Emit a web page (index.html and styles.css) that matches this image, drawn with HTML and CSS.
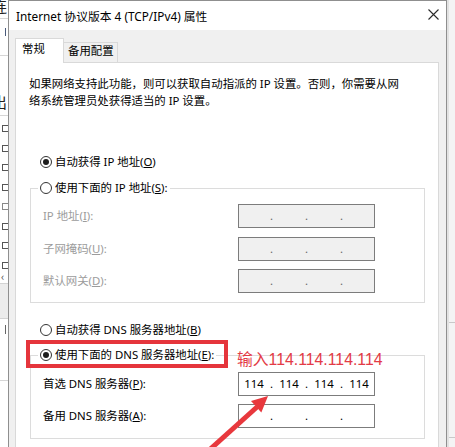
FILE: index.html
```html
<!DOCTYPE html>
<html lang="zh-CN">
<head>
<meta charset="utf-8">
<title>Internet 协议版本 4 (TCP/IPv4) 属性</title>
<link rel="stylesheet" href="styles.css">
</head>
<body>
<div class="screen">
  <div class="bg-left">
    <span class="glyph g-top">连</span>
    <i class="hline l1"></i>
    <i class="tick"></i>
    <i class="hline l2"></i>
    <span class="glyph g-mid">出</span>
    <i class="hline l3"></i>
    <div class="checks">
      <i class="chk"></i><i class="chk"></i><i class="chk"></i><i class="chk"></i>
      <i class="chk empty"></i><i class="chk"></i><i class="chk"></i><i class="chk"></i>
    </div>
    <span class="glyph g-chev">‹</span>
    <i class="band"></i>
    <i class="tick t2"></i>
    <i class="hline l4"></i>
  </div>

  <div class="dialog">
    <header class="titlebar">
      <span class="title">Internet 协议版本 4 (TCP/IPv4) 属性</span>
      <svg class="close" width="11" height="11" viewBox="0 0 11 11"><path d="M0.5 0.5 L10.5 10.5 M10.5 0.5 L0.5 10.5" stroke="#2b2b2b" stroke-width="1.1" fill="none"/></svg>
    </header>
    <div class="dialog-body">
      <div class="tabs">
        <div class="tab active">常规</div>
        <div class="tab">备用配置</div>
      </div>
      <div class="panel">
        <p class="desc">如果网络支持此功能，则可以获取自动指派的 IP 设置。否则，你需要从网<br>络系统管理员处获得适当的 IP 设置。</p>

        <div class="option first"><span class="radio on"></span><span>自动获得 IP 地址(<u>O</u>)</span></div>

        <fieldset class="group ip-group">
          <legend><span class="option"><span class="radio"></span><span>使用下面的 IP 地址(<u>S</u>):</span></span></legend>
          <div class="fields">
            <div class="field disabled"><span>IP 地址(<u>I</u>):</span><span class="ip off"><i></i><b>.</b><i></i><b>.</b><i></i><b>.</b><i></i></span></div>
            <div class="field disabled"><span>子网掩码(<u>U</u>):</span><span class="ip off"><i></i><b>.</b><i></i><b>.</b><i></i><b>.</b><i></i></span></div>
            <div class="field disabled"><span>默认网关(<u>D</u>):</span><span class="ip off"><i></i><b>.</b><i></i><b>.</b><i></i><b>.</b><i></i></span></div>
          </div>
        </fieldset>

        <div class="option third"><span class="radio"></span><span>自动获得 DNS 服务器地址(<u>B</u>)</span></div>

        <fieldset class="group dns-group">
          <legend><span class="option"><span class="radio on"></span><span>使用下面的 DNS 服务器地址(<u>E</u>):</span></span></legend>
          <div class="fields dns-fields">
            <div class="field"><span>首选 DNS 服务器(<u>P</u>):</span><span class="ip"><i>114</i><b>.</b><i>114</i><b>.</b><i>114</i><b>.</b><i>114</i></span></div>
            <div class="field"><span>备用 DNS 服务器(<u>A</u>):</span><span class="ip"><i></i><b>.</b><i></i><b>.</b><i></i><b>.</b><i></i></span></div>
          </div>
        </fieldset>
      </div>
    </div>
  </div>

  <div class="bg-right">
    <i class="rline r1"></i>
    <i class="rline r2"></i>
  </div>

  <div class="mark-box"></div>
  <div class="note">输入114.114.114.114</div>
  <svg class="arrow" width="455" height="447" viewBox="0 0 455 447">
    <line x1="206" y1="453" x2="257" y2="407" stroke="#e8383d" stroke-width="5"/>
    <polygon points="268,396 261.3,412.5 251,401" fill="#e8383d"/>
  </svg>
</div>
</body>
</html>
```

FILE: styles.css
```css
* { box-sizing: border-box; }

html, body { margin: 0; padding: 0; }

body {
  width: 455px;
  height: 447px;
  overflow: hidden;
  background: #ffffff;
  font-family: "Noto Sans", "Noto Sans CJK SC", sans-serif;
  font-size: 11.4px;
  color: #000;
  text-autospace: no-autospace;
}

.screen {
  position: relative;
  display: flex;
  width: 455px;
  height: 447px;
  overflow: hidden;
}

/* ---------- background window, left strip ---------- */
.bg-left {
  width: 8px;
  flex: none;
  overflow: hidden;
  background: #fff;
  display: flex;
  flex-direction: column;
  font-family: "Noto Sans CJK SC", sans-serif;
}
.glyph {
  display: block;
  white-space: nowrap;
  color: #222;
  font-size: 15px;
  line-height: 15px;
}
.g-top { margin: -2px 0 0 -8px; height: 14px; }
.g-mid { margin: 38px 0 0 -8px; height: 15px; }
.g-chev { margin: 2px 0 0 1px; font-size: 11px; line-height: 10px; height: 10px; color: #444; }
.hline { display: block; height: 1px; background: #d6d6d6; }
.l1 { margin-top: 6px; }
.l2 { margin-top: 19px; }
.l3 { margin-top: 6px; }
.l4 { margin-top: 46px; }
.tick { display: block; width: 1px; height: 8px; margin: 9px 0 0 5px; background: #4a5a7a; }
.t2 { margin: 6px 0 0 5px; background: #666; height: 9px; }
.checks { display: flex; flex-direction: column; gap: 12.5px; margin-top: 9px; }
.chk { display: block; width: 9px; height: 7px; margin-left: 2px; border: 1px solid #555; border-right: none; background: #fff; }
.chk.empty { border-color: #888; }
.band { display: block; height: 36px; margin-top: 2px; background: #ececec; border-top: 1px solid #d3d3d3; border-bottom: 1px solid #d3d3d3; }

/* ---------- background window, right strip ---------- */
.bg-right {
  width: 8px;
  flex: none;
  background: #f4f4f4;
  border-left: 2px solid #e2e2e2;
  display: flex;
  flex-direction: column;
}
.rline { display: block; height: 1px; background: #c9c9c9; }
.r1 { margin-top: 322px; }
.r2 { margin-top: 114px; }

/* ---------- dialog ---------- */
.dialog {
  width: 439px;
  flex: none;
  display: flex;
  flex-direction: column;
  border: 1px solid #8f8f8f;
  border-bottom: none;
  background: #f0f0f0;
}

.titlebar {
  height: 29px;
  flex: none;
  background: #fff;
  display: flex;
  align-items: center;
  justify-content: space-between;
  padding: 0 7px;
}
.title { font-size: 11.8px; line-height: 16px; white-space: nowrap; }
.close { display: block; margin-bottom: 2px; }

.dialog-body {
  flex: 1;
  display: flex;
  flex-direction: column;
  padding: 8px 7px 0 6px;
}

.tabs {
  display: flex;
  align-items: flex-end;
  height: 24px;
  flex: none;
}
.tab {
  line-height: 16px;
  white-space: nowrap;
  border: 1px solid #d9d9d9;
  border-bottom: none;
}
.tab.active {
  position: relative;
  z-index: 1;
  width: 49px;
  height: 25px;
  margin-bottom: -1px;
  padding: 2px 0 0 6px;
  background: #fff;
}
.tab:not(.active) {
  width: 55px;
  height: 20px;
  margin-left: -1px;
  padding: 0 0 0 4px;
  background: #f0f0f0;
}

.panel {
  flex: 1;
  background: #fff;
  border: 1px solid #d9d9d9;
  border-bottom: none;
  padding-top: 12px;
}

.desc {
  margin: 0 0 0 13px;
  line-height: 17px;
  white-space: nowrap;
}

.option {
  display: flex;
  align-items: center;
  gap: 3px;
  height: 16px;
  line-height: 16px;
  white-space: nowrap;
}
.option.first { margin: 45px 0 0 24px; }
.option.third { margin: 19px 0 0 24px; }

.radio {
  width: 12px;
  height: 12px;
  flex: none;
  border: 1px solid #333;
  border-radius: 50%;
  background: #fff;
  display: grid;
  place-items: center;
}
.radio.on::after {
  content: "";
  width: 6px;
  height: 6px;
  border-radius: 50%;
  background: #1c1c1c;
}

u { text-decoration: underline; text-underline-offset: 1px; text-decoration-thickness: 1px; }

.group {
  margin: 10px 13px 0 14px;
  padding: 8px 0 9px 7px;
  border: 1px solid #dcdcdc;
  min-inline-size: 0;
}
.group legend { padding: 0 2px; }
.dns-group { margin-top: 9px; padding: 9px 0 10px 7px; }

.fields { display: flex; flex-direction: column; gap: 8.5px; }
.dns-fields { gap: 8px; }

.field {
  display: grid;
  grid-template-columns: 195px 137px;
  align-items: center;
  height: 24px;
  padding-left: 5px;
  line-height: 16px;
  white-space: nowrap;
}
.field.disabled { color: #9c9c9c; }

.ip {
  display: grid;
  grid-template-columns: 30px 5px 30px 5px 30px 5px 30px;
  height: 24px;
  border: 1px solid #7c7c7c;
  background: #fff;
  line-height: 21px;
  text-align: center;
  color: #000;
}
.ip i, .ip b { font-style: normal; font-weight: normal; }
.ip.off { background: #f0f0f0; color: #6a6a6a; }

/* ---------- annotations over the screenshot ---------- */
.mark-box {
  position: absolute;
  left: 26px;
  top: 340px;
  width: 202px;
  height: 28px;
  border: 4px solid #e5353c;
}
.note {
  position: absolute;
  left: 237px;
  top: 352px;
  font-family: "Liberation Sans", "Noto Sans CJK SC", sans-serif;
  font-size: 15.8px;
  line-height: 16px;
  color: #e33b46;
  white-space: nowrap;
}
.arrow {
  position: absolute;
  left: 0;
  top: 0;
  pointer-events: none;
}
```
